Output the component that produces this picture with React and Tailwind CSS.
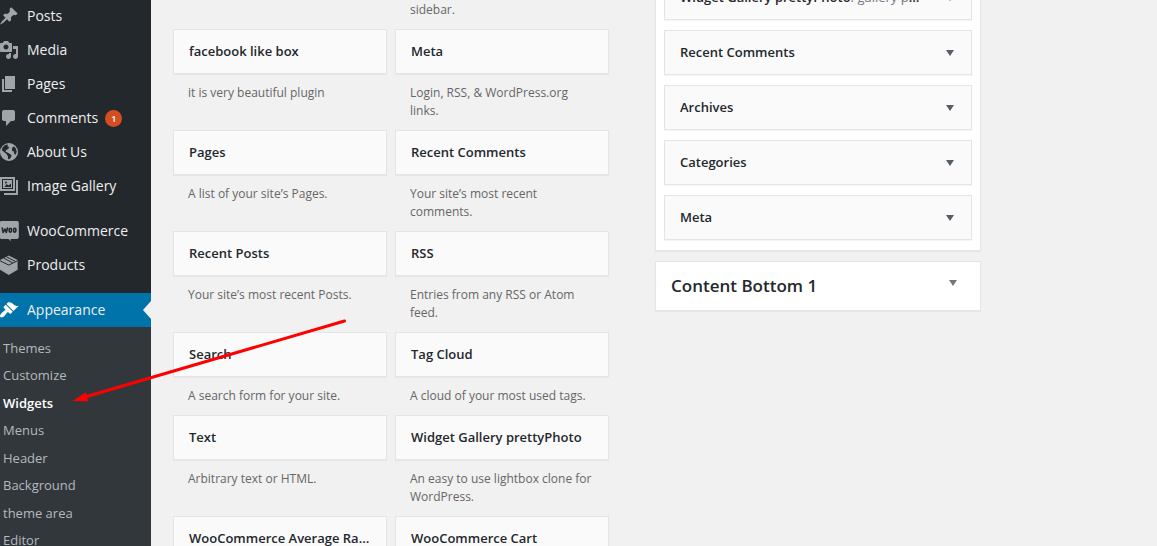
import React from "react";

const ICONS = {
  post: (
    <path d="M10.44 3.02l1.82-1.82 6.36 6.35-1.83 1.82c-1.05-.68-2.48-.57-3.41.36l-.75.75c-.92.93-1.04 2.35-.35 3.41l-1.83 1.82-2.41-2.41-2.8 2.79c-.42.42-3.38 2.71-3.8 2.29s1.86-3.39 2.28-3.81l2.79-2.79L4.1 9.36l1.83-1.82c1.05.69 2.48.57 3.4-.36l.75-.75c.93-.92 1.05-2.35.36-3.41z" />
  ),
  media: (
    <path
      fillRule="evenodd"
      d="M13 11V4c0-.55-.45-1-1-1h-1.67L9 1H5L3.67 3H2c-.55 0-1 .45-1 1v7c0 .55.45 1 1 1h10c.55 0 1-.45 1-1zM7 4.5c1.38 0 2.5 1.12 2.5 2.5S8.38 9.5 7 9.5 4.5 8.38 4.5 7 5.62 4.5 7 4.5zM14 6h5v10.5c0 1.38-1.12 2.5-2.5 2.5S14 17.88 14 16.5s1.12-2.5 2.5-2.5c.17 0 .34.02.5.05V9h-3V6zm-4 8.05V13h2v3.5c0 1.38-1.12 2.5-2.5 2.5S7 17.88 7 16.5 8.12 14 9.5 14c.17 0 .34.02.5.05z"
    />
  ),
  page: <path d="M6 15V2h10v13H6zm-1 1h8v2H3V5h2v11z" />,
  comments: (
    <path d="M5 2h9c1.1 0 2 .9 2 2v7c0 1.1-.9 2-2 2h-2l-5 5v-5H5c-1.1 0-2-.9-2-2V4c0-1.1.9-2 2-2z" />
  ),
  site: (
    <path
      fillRule="evenodd"
      d="M10 1a9 9 0 1 0 0 18 9 9 0 0 0 0-18zM3.500 5.500L6 3l3-.6-.5 2 2 .8L9 7 7 8.300 6.500 9.800l1.500.4 2.500 1.600 2 1.200-.5 2.500-2 2-.8-.5-.4-3L7.500 12 5 10 2.800 8.300zM13 6l2-1.800 2 2.600.7 3.200-1.200 2.700-1.300-.7-.2-2.500-2-.5z"
    />
  ),
  images: (
    <path
      fillRule="evenodd"
      d="M1 1h15v14H1zm2 2v10h11V3zM4 4h9v8H4zm1.500 7h6.500V7.500L9.500 9.500 7.500 8zM7 5.500a1 1 0 1 0 0 2 1 1 0 0 0 0-2zM17 4h2v15H5v-2h12z"
    />
  ),
  woo: (
    <>
      <path d="M2.500 0H18a1.800 1.800 0 0 1 1.800 1.800v14.400A1.800 1.800 0 0 1 18 18h-6.500l.3 2.200L9.500 18h-7a1.800 1.800 0 0 1-1.800-1.800V1.800A1.800 1.800 0 0 1 2.500 0z" />
      <path
        className="fill-none stroke-[#23282d]"
        strokeWidth="1.6"
        strokeLinecap="round"
        strokeLinejoin="round"
        d="M3.200 7l1 4.500L6 8l1.300 3.500L8.500 7M11.500 7.300c-.9 0-1.400 1-1.400 2.200 0 1 .3 1.600 1 1.600.9 0 1.400-1 1.400-2.200 0-.9-.3-1.600-1-1.600zM15.900 7.300c-.9 0-1.400 1-1.400 2.200 0 1 .3 1.600 1 1.600.9 0 1.400-1 1.400-2.200 0-.9-.3-1.600-1-1.600z"
      />
    </>
  ),
  products: (
    <>
      <path d="M9.800.5L18.600 5v9.800L9.800 20 1 14.800V5z" />
      <path
        className="fill-none stroke-[#23282d]"
        strokeWidth="1"
        d="M1 5.700l8.800 4.400 8.800-4.400M7.300 1.700L16.200 6.300M4.800 3.200l8.800 4.600"
      />
    </>
  ),
  appearance: (
    <path d="M14.480 11.060L7.410 3.990l1.500-1.500c.5-.56 2.300-.47 3.510.32 1.210.8 1.430 1.280 2.910 2.100 1.180.64 2.450 1.260 4.450.85zm-.71.71L6.700 4.700 4.930 6.470c-.39.39-.39 1.020 0 1.410l1.060 1.060c.39.39.39 1.030 0 1.420-.6.6-1.430 1.110-2.210 1.690-.35.26-.7.53-1.010.84C1.430 14.230.4 16.080 1.400 17.070c.99 1 2.840-.03 4.180-1.360.31-.31.58-.66.85-1.020.57-.78 1.080-1.610 1.690-2.210.39-.39 1.020-.39 1.410 0l1.060 1.060c.39.39 1.020.39 1.410 0z" />
  ),
};

const MENU_GROUPS = [
  [
    { label: "Posts", icon: "post" },
    { label: "Media", icon: "media" },
    { label: "Pages", icon: "page" },
    { label: "Comments", icon: "comments", count: 1 },
    { label: "About Us", icon: "site" },
    { label: "Image Gallery", icon: "images" },
  ],
  [
    { label: "WooCommerce", icon: "woo" },
    { label: "Products", icon: "products" },
  ],
  [{ label: "Appearance", icon: "appearance", active: true }],
];

const SUBMENU = [
  "Themes",
  "Customize",
  "Widgets",
  "Menus",
  "Header",
  "Background",
  "theme area",
  "Editor",
];

const WIDGETS = [
  ["facebook like box", "it is very beautiful plugin"],
  ["Meta", "Login, RSS, & WordPress.org links."],
  ["Pages", "A list of your site’s Pages."],
  ["Recent Comments", "Your site’s most recent comments."],
  ["Recent Posts", "Your site’s most recent Posts."],
  ["RSS", "Entries from any RSS or Atom feed."],
  ["Search", "A search form for your site."],
  ["Tag Cloud", "A cloud of your most used tags."],
  ["Text", "Arbitrary text or HTML."],
  ["Widget Gallery prettyPhoto", "An easy to use lightbox clone for WordPress."],
  ["WooCommerce Average Rating Filter", ""],
  ["WooCommerce Cart", ""],
];

const PLACED = [
  { title: "Widget Gallery prettyPhoto", note: "gallery photos" },
  { title: "Recent Comments" },
  { title: "Archives" },
  { title: "Categories" },
  { title: "Meta" },
];

function MenuItem({ label, icon, count, active }) {
  return (
    <li className={active ? "relative bg-[#0073aa]" : "relative"}>
      <a href="#" className="flex h-[34px] items-center gap-2 text-sm text-[#eeeeee]">
        <svg
          viewBox="0 0 20 20"
          aria-hidden="true"
          className={
            active
              ? "-ml-px size-5 shrink-0 overflow-visible fill-white"
              : "-ml-px size-5 shrink-0 overflow-visible fill-[#a0a5aa]"
          }
        >
          {ICONS[icon]}
        </svg>
        <span className="flex items-center gap-[7px]">
          {label}
          {count && (
            <span className="size-[17px] rounded-full bg-[#d54e21] text-center text-[9px] leading-[17px] font-semibold text-white">
              {count}
            </span>
          )}
        </span>
      </a>
      {active && (
        <span className="absolute top-2 right-0 border-y-[9px] border-r-8 border-y-transparent border-r-[#f1f1f1]" />
      )}
    </li>
  );
}

function Sidebar() {
  return (
    <nav aria-label="Main menu" className="w-[151px] shrink-0 bg-[#23282d]">
      <div className="-mt-px flex flex-col gap-[11px]">
        {MENU_GROUPS.map((group) => (
          <ul key={group[0].label}>
            {group.map((item) => (
              <MenuItem key={item.label} {...item} />
            ))}
          </ul>
        ))}
      </div>
      <ul className="grid h-[234px] auto-rows-fr bg-[#32373c] py-[7px]">
        {SUBMENU.map((label) => (
          <li key={label} className="flex items-center">
            <a
              href="#"
              className={
                label === "Widgets"
                  ? "pl-[3px] text-[13px] leading-[18px] font-semibold text-white"
                  : "pl-[3px] text-[13px] leading-[18px] text-[#b4b9be]"
              }
            >
              {label}
            </a>
          </li>
        ))}
      </ul>
    </nav>
  );
}

function Triangle({ className }) {
  return (
    <svg viewBox="0 0 8 6" aria-hidden="true" className={className}>
      <path d="M0 0h8L4 6z" />
    </svg>
  );
}

function AvailableWidget({ title, description }) {
  return (
    <div className="min-w-0">
      <h3 className="h-[45px] truncate border border-[#e5e5e5] bg-[#fafafa] px-[15px] text-[13px] leading-[43px] font-semibold text-[#23282d] shadow-[0_1px_1px_rgba(0,0,0,0.04)]">
        {title}
      </h3>
      <p className="px-[15px] py-[10px] text-xs leading-[18px] text-[#666666]">
        {description}
      </p>
    </div>
  );
}

function PlacedWidget({ title, note }) {
  return (
    <li>
      <button
        type="button"
        className="flex h-[45px] w-full items-center justify-between border border-[#e5e5e5] bg-[#fafafa] pr-[17px] pl-[15px] text-left shadow-[0_1px_1px_rgba(0,0,0,0.04)]"
      >
        <span className="max-w-[243px] truncate text-[13px] leading-[43px] font-semibold text-[#23282d]">
          {title}
          {note && <span className="font-normal text-[#72777c]">: {note}</span>}
        </span>
        <Triangle className="h-1.5 w-2 fill-[#555d66]" />
      </button>
    </li>
  );
}

function PointerArrow() {
  return (
    <svg
      viewBox="0 0 276 84"
      aria-hidden="true"
      className="pointer-events-none absolute top-[319px] left-[72px] h-[84px] w-[276px] fill-[#ff0000]"
    >
      <path
        className="stroke-[#ff0000]"
        strokeWidth="3"
        strokeLinecap="round"
        d="M272.500 2L13 78"
      />
      <path d="M.5 82L14 73.200 16 82.200z" />
    </svg>
  );
}

export default function App() {
  return (
    <div className="relative flex h-screen overflow-hidden bg-[#f1f1f1] font-['Open_Sans',sans-serif]">
      <Sidebar />
      <main className="grid flex-1 grid-cols-[436fr_326fr_130fr] items-start gap-x-[46px] pl-[22px]">
        <section aria-label="Available widgets" className="grid grid-cols-2 gap-x-2 pt-px">
          <p className="col-start-2 px-[15px] pb-[10px] text-xs leading-[18px] text-[#666666]">
            sidebar.
          </p>
          {WIDGETS.map(([title, description]) => (
            <AvailableWidget key={title} title={title} description={description} />
          ))}
        </section>
        <section aria-label="Widget areas" className="-mt-[25px] flex flex-col gap-[10px]">
          <ul className="flex flex-col gap-[10px] border border-t-0 border-[#e5e5e5] bg-white px-2 pb-[10px] shadow-[0_1px_1px_rgba(0,0,0,0.04)]">
            {PLACED.map((item) => (
              <PlacedWidget key={item.title} {...item} />
            ))}
          </ul>
          <button
            type="button"
            className="flex h-[50px] items-start justify-between border border-[#e5e5e5] bg-white pr-[23px] pl-[15px] text-[#23282d] shadow-[0_1px_1px_rgba(0,0,0,0.04)]"
          >
            <span className="text-[17px] leading-[48px] font-semibold">Content Bottom 1</span>
            <Triangle className="mt-[18px] h-1.5 w-2 fill-[#72777c]" />
          </button>
        </section>
      </main>
      <PointerArrow />
    </div>
  );
}
